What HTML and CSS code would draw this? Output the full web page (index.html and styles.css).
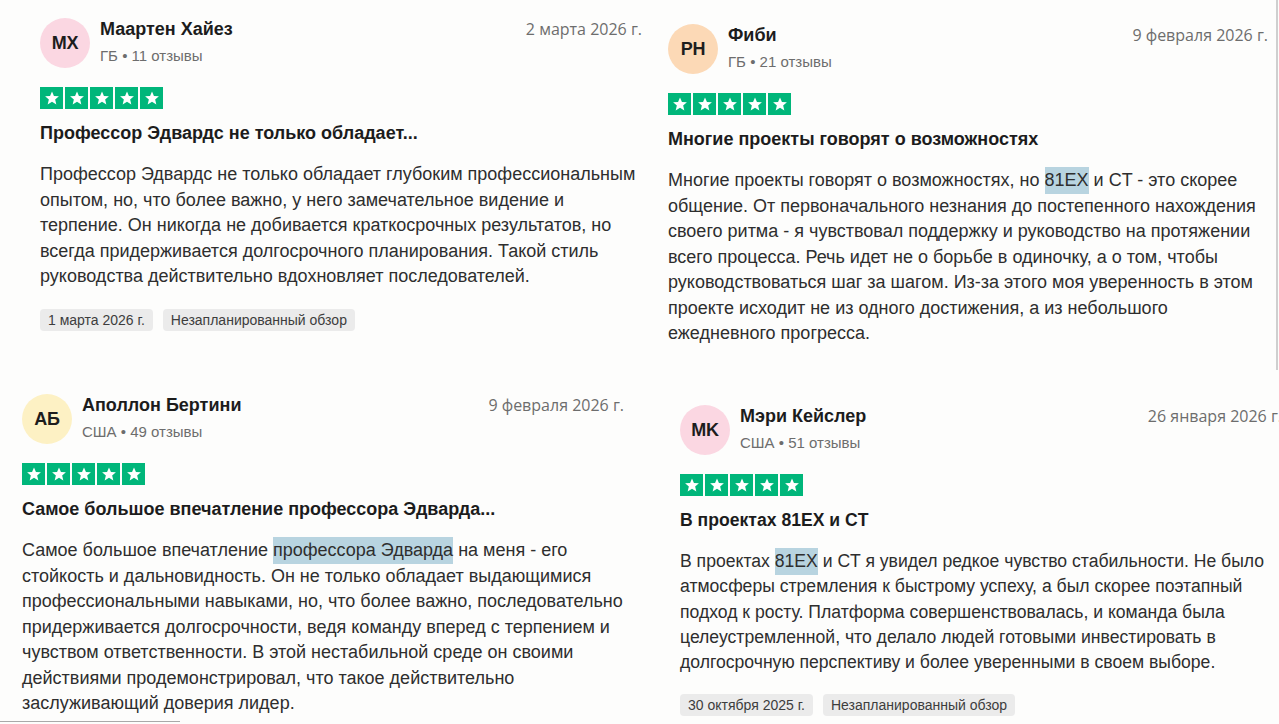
FILE: index.html
```html
<!DOCTYPE html>
<html lang="ru">
<head>
<meta charset="utf-8">
<title>Отзывы</title>
<link rel="stylesheet" href="styles.css">
</head>
<body>
<svg width="0" height="0" class="defs" aria-hidden="true">
  <defs>
    <symbol id="star" viewBox="0 0 24 24">
      <path d="M12 3.2l2.6 6.1 6.6.5-5 4.3 1.6 6.5L12 17.1l-5.8 3.5 1.6-6.5-5-4.3 6.6-.5z" fill="#fff"/>
    </symbol>
  </defs>
</svg>
<main class="board">

  <article class="review review--a">
    <header class="review-head">
      <div class="avatar avatar--pink">МХ</div>
      <div class="who">
        <div class="name">Маартен Хайез</div>
        <div class="meta">ГБ • 11 отзывы</div>
      </div>
      <div class="date">2 марта 2026 г.</div>
    </header>
    <div class="stars">
      <span class="star"><svg><use href="#star"/></svg></span>
      <span class="star"><svg><use href="#star"/></svg></span>
      <span class="star"><svg><use href="#star"/></svg></span>
      <span class="star"><svg><use href="#star"/></svg></span>
      <span class="star"><svg><use href="#star"/></svg></span>
    </div>
    <h2 class="title">Профессор Эдвардс не только обладает...</h2>
    <p class="text">Профессор Эдвардс не только обладает глубоким профессиональным<br>опытом, но, что более важно, у него замечательное видение и<br>терпение. Он никогда не добивается краткосрочных результатов, но<br>всегда придерживается долгосрочного планирования. Такой стиль<br>руководства действительно вдохновляет последователей.</p>
    <div class="tags">
      <span class="tag">1 марта 2026 г.</span>
      <span class="tag">Незапланированный обзор</span>
    </div>
  </article>

  <article class="review review--b">
    <header class="review-head">
      <div class="avatar avatar--peach">PH</div>
      <div class="who">
        <div class="name">Фиби</div>
        <div class="meta">ГБ • 21 отзывы</div>
      </div>
      <div class="date">9 февраля 2026 г.</div>
    </header>
    <div class="stars">
      <span class="star"><svg><use href="#star"/></svg></span>
      <span class="star"><svg><use href="#star"/></svg></span>
      <span class="star"><svg><use href="#star"/></svg></span>
      <span class="star"><svg><use href="#star"/></svg></span>
      <span class="star"><svg><use href="#star"/></svg></span>
    </div>
    <h2 class="title">Многие проекты говорят о возможностях</h2>
    <p class="text">Многие проекты говорят о возможностях, но <mark class="hl">81EX</mark> и CT - это скорее<br>общение. От первоначального незнания до постепенного нахождения<br>своего ритма - я чувствовал поддержку и руководство на протяжении<br>всего процесса. Речь идет не о борьбе в одиночку, а о том, чтобы<br>руководствоваться шаг за шагом. Из-за этого моя уверенность в этом<br>проекте исходит не из одного достижения, а из небольшого<br>ежедневного прогресса.</p>
  </article>

  <article class="review review--c">
    <header class="review-head">
      <div class="avatar avatar--yellow">АБ</div>
      <div class="who">
        <div class="name">Аполлон Бертини</div>
        <div class="meta">США • 49 отзывы</div>
      </div>
      <div class="date">9 февраля 2026 г.</div>
    </header>
    <div class="stars">
      <span class="star"><svg><use href="#star"/></svg></span>
      <span class="star"><svg><use href="#star"/></svg></span>
      <span class="star"><svg><use href="#star"/></svg></span>
      <span class="star"><svg><use href="#star"/></svg></span>
      <span class="star"><svg><use href="#star"/></svg></span>
    </div>
    <h2 class="title">Самое большое впечатление профессора Эдварда...</h2>
    <p class="text">Самое большое впечатление <mark class="hl">профессора Эдварда</mark> на меня - его<br>стойкость и дальновидность. Он не только обладает выдающимися<br>профессиональными навыками, но, что более важно, последовательно<br>придерживается долгосрочности, ведя команду вперед с терпением и<br>чувством ответственности. В этой нестабильной среде он своими<br>действиями продемонстрировал, что такое действительно<br>заслуживающий доверия лидер.</p>
    <div class="cut-line"></div>
  </article>

  <article class="review review--d">
    <header class="review-head">
      <div class="avatar avatar--pink">MK</div>
      <div class="who">
        <div class="name">Мэри Кейслер</div>
        <div class="meta">США • 51 отзывы</div>
      </div>
      <div class="date">26 января 2026 г.</div>
    </header>
    <div class="stars">
      <span class="star"><svg><use href="#star"/></svg></span>
      <span class="star"><svg><use href="#star"/></svg></span>
      <span class="star"><svg><use href="#star"/></svg></span>
      <span class="star"><svg><use href="#star"/></svg></span>
      <span class="star"><svg><use href="#star"/></svg></span>
    </div>
    <h2 class="title">В проектах 81EX и CT</h2>
    <p class="text">В проектах <mark class="hl">81EX</mark> и CT я увидел редкое чувство стабильности. Не было<br>атмосферы стремления к быстрому успеху, а был скорее поэтапный<br>подход к росту. Платформа совершенствовалась, и команда была<br>целеустремленной, что делало людей готовыми инвестировать в<br>долгосрочную перспективу и более уверенными в своем выборе.</p>
    <div class="tags">
      <span class="tag">30 октября 2025 г.</span>
      <span class="tag">Незапланированный обзор</span>
    </div>
  </article>

</main>
</body>
</html>
```
FILE: styles.css
```css
* { box-sizing: border-box; }

html, body {
  margin: 0;
  padding: 0;
  background: #fdfdfc;
}

body {
  width: 1279px;
  height: 724px;
  overflow: hidden;
  font-family: "Liberation Sans", Arial, sans-serif;
  color: #2b2b2b;
}

.defs { position: absolute; }

.board {
  display: grid;
  grid-template-columns: 650px 629px;
  grid-template-rows: 370px 354px;
  width: 1279px;
  height: 724px;
}

.review {
  overflow: hidden;
  background: #fdfdfc;
}

.review--a { padding: 18px 0 0 40px; }
.review--b { padding: 24px 0 0 18px; border-right: 2px solid #cfcfcf; width: 628px; }
.review--c { padding: 24px 0 0 22px; }
.review--d { padding: 35px 0 0 30px; }

.review-head,
.review .title,
.review .tags {
  width: 602px;
}
.review .text { width: 620px; }
.review--b .review-head { width: 600px; }

.review-head {
  display: flex;
  align-items: flex-start;
}

.avatar {
  width: 50px;
  height: 50px;
  border-radius: 50%;
  flex: none;
  display: flex;
  align-items: center;
  justify-content: center;
  font-weight: 700;
  font-size: 18px;
  color: #1d1d1d;
  letter-spacing: -0.3px;
}
.avatar--pink { background: #fbd7e2; }
.avatar--peach { background: #fcd9b6; }
.avatar--yellow { background: #fdf1c4; }

.who {
  margin-left: 10px;
  flex: 1;
}

.name {
  font-size: 18px;
  line-height: 22px;
  font-weight: 700;
  color: #1c1c1c;
}

.meta {
  margin-top: 6px;
  font-size: 15px;
  line-height: 20px;
  color: #6d6d6d;
}

.date {
  font-family: "Open Sans", "Liberation Sans", sans-serif;
  font-size: 16px;
  line-height: 22px;
  color: #6d6d6d;
  white-space: nowrap;
}

.stars {
  display: flex;
  gap: 2px;
  margin-top: 19px;
}

.star {
  width: 23px;
  height: 22px;
  background: #00b67a;
  display: flex;
  align-items: center;
  justify-content: center;
}
.star svg {
  width: 18px;
  height: 18px;
}

.title {
  margin: 12px 0 0;
  font-size: 18px;
  line-height: 24px;
  font-weight: 700;
  color: #1c1c1c;
}

.text {
  margin: 17px 0 0;
  font-size: 18px;
  line-height: 25.5px;
  color: #2e2e2e;
}

.review--d .title,
.review--d .text { font-size: 17.6px; }
.review--d .text { line-height: 25.25px; }

.hl {
  background: #b8d4e0;
  color: inherit;
  padding: 3px 0 4px;
}

.tags {
  display: flex;
  gap: 10px;
  margin-top: 19px;
}

.tag {
  background: #ebebeb;
  border-radius: 4px;
  padding: 0 8px;
  height: 22px;
  line-height: 22px;
  font-size: 14px;
  color: #3d3d3d;
}

.cut-line {
  width: 180px;
  height: 1px;
  margin: 4px 0 0 -22px;
  background: #a9a9a9;
}
```
